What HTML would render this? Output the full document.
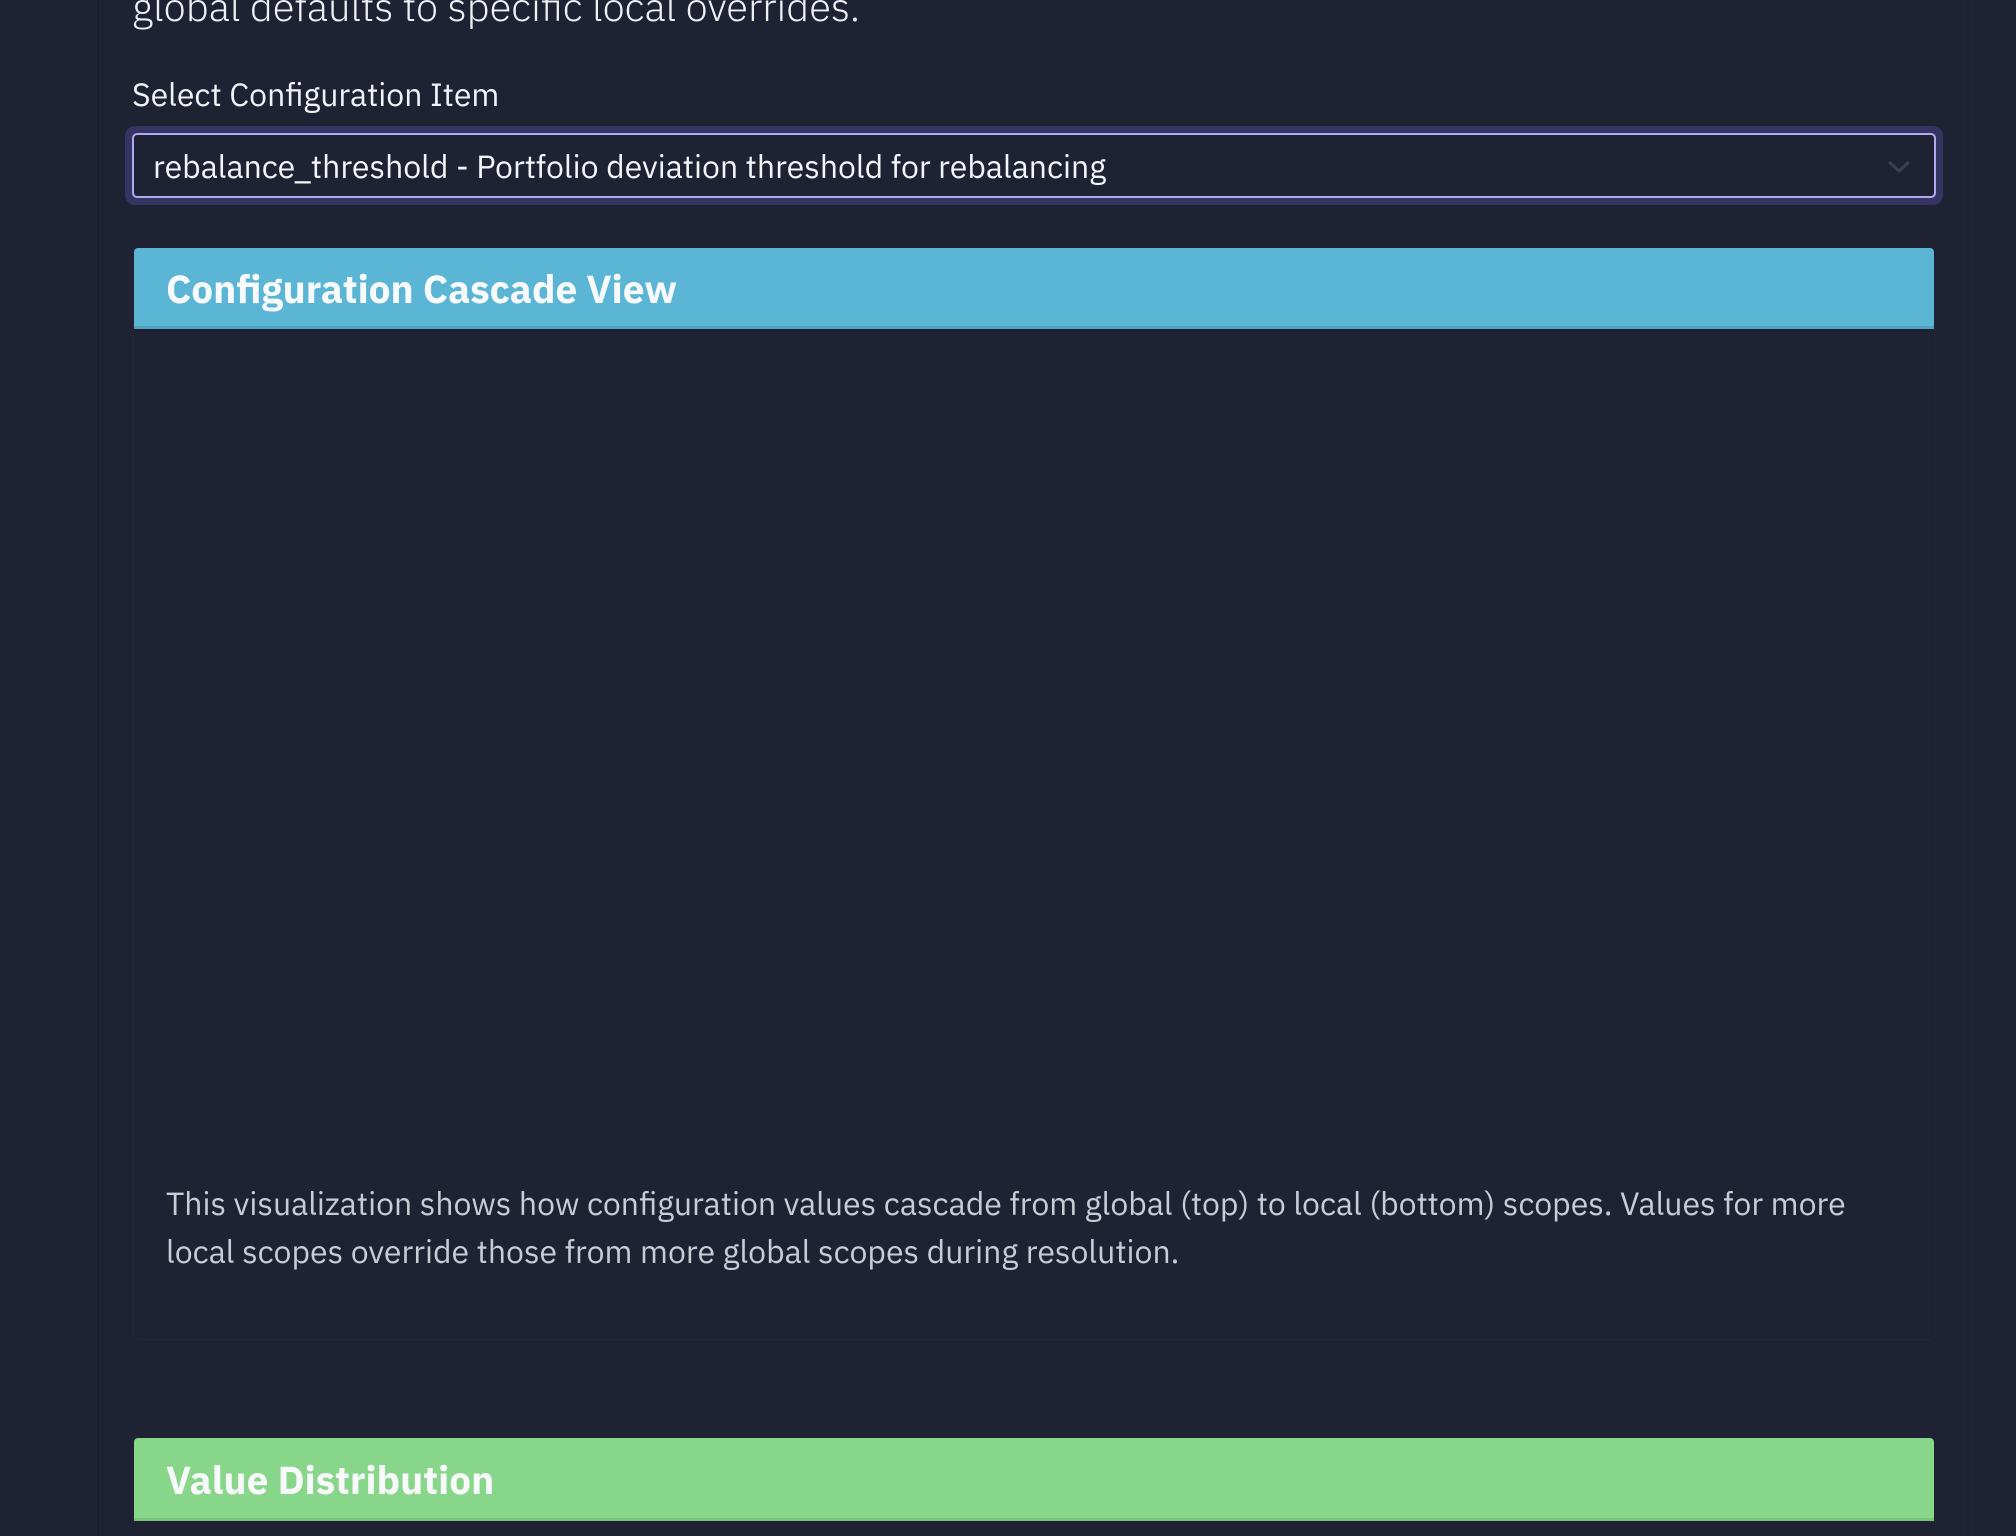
<!DOCTYPE html>
<html><head><meta charset="utf-8"><style>
html,body{margin:0;padding:0;width:2016px;height:1536px;overflow:hidden;background:#1e2233;font-family:"IBM Plex Sans","Liberation Sans",sans-serif;}
.vl{position:absolute;top:0;width:2px;height:1536px;background:#1b1f2f;}
.t{position:absolute;white-space:nowrap;}
</style></head><body>
<div class="vl" style="left:97px"></div>
<div class="vl" style="left:1967px"></div>
<div class="t" style="left:132px;top:-20px;font-size:40px;font-weight:300;color:#eef0f4;">global defaults to specific local overrides.</div>
<div class="t" style="left:132px;top:73px;font-size:32px;color:#f0f2f6;">Select Configuration Item</div>
<div style="position:absolute;left:125px;top:126px;width:1818px;height:79px;background:#363463;border-radius:10px;"></div>
<div style="position:absolute;left:132px;top:133px;width:1800px;height:61px;border:2px solid #b5a8f0;background:#1e2233;border-radius:5px;"></div>
<div class="t" style="left:153px;top:145px;font-size:32px;color:#f4f5f8;">rebalance_threshold - Portfolio deviation threshold for rebalancing</div>
<svg style="position:absolute;left:1887px;top:159px" width="24" height="16"><path d="M2 3 L12 12 L22 3" stroke="#3a3f52" stroke-width="3" fill="none"/></svg>
<div style="position:absolute;left:133px;top:329px;width:1800px;height:1010px;border:1px solid #232838;border-top:none;border-radius:0 0 6px 6px;"></div>
<div style="position:absolute;left:134px;top:248px;width:1800px;height:78px;background:#5ab6d4;border-bottom:3px solid #4fa2bd;border-radius:4px 4px 0 0;"></div>
<div class="t" style="left:166px;top:263px;font-size:38.8px;font-weight:bold;color:#f7f9fb;">Configuration Cascade View</div>
<div style="position:absolute;left:166px;top:1179px;width:1720px;font-size:32px;line-height:48px;color:#c8ccd5;">This visualization shows how configuration values cascade from global (top) to local (bottom) scopes. Values for more local scopes override those from more global scopes during resolution.</div>
<div style="position:absolute;left:134px;top:1438px;width:1800px;height:80px;background:#88d68a;border-bottom:3px solid #79c47c;border-radius:4px 4px 0 0;"></div>
<div class="t" style="left:166px;top:1454px;font-size:38.8px;font-weight:bold;color:#f7f9fb;">Value Distribution</div>
</body></html>
